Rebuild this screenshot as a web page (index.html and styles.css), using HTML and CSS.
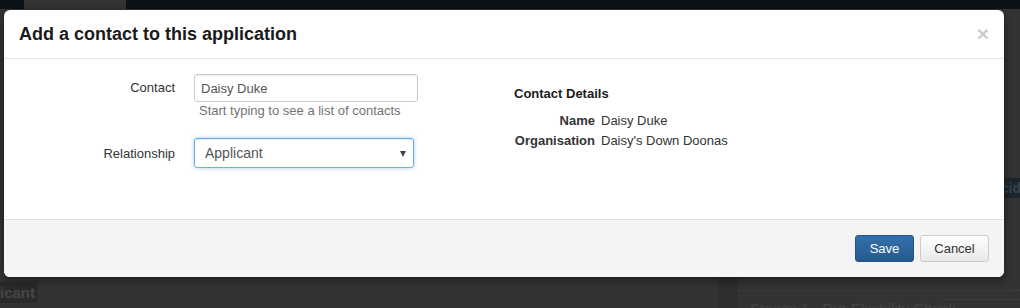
FILE: index.html
```html
<!DOCTYPE html>
<html>
<head>
  <title>Add a contact</title>
  <link rel="stylesheet" href="styles.css">
</head>
<body>
  <div class="page">
    <div class="navbar"><span class="nav-tab"></span></div>
    <div class="page-body">
      <span class="badge-left">icant</span>
      <span class="badge-right">cid</span>
      <span class="side-col"></span>
      <div class="stage-row">
        <span class="stage-title">Stages 1 - Pre-Eligibility Check</span>
        <span class="stage-box"></span>
      </div>
    </div>
  </div>

  <div class="modal">
    <div class="modal-header">
      <h4 class="modal-title">Add a contact to this application</h4>
      <button class="close" type="button">&times;</button>
    </div>

    <div class="modal-body">
      <form class="contact-form">
        <div class="form-group">
          <label for="contact">Contact</label>
          <div class="field">
            <input type="text" id="contact" class="form-control" value="Daisy Duke">
            <span class="help-block">Start typing to see a list of contacts</span>
          </div>
        </div>
        <div class="form-group">
          <label for="relationship" class="label-select">Relationship</label>
          <div class="field">
            <div class="select-wrap">
              <select id="relationship" class="form-control focused">
                <option>Applicant</option>
                <option>Referee</option>
              </select>
            </div>
          </div>
        </div>
      </form>

      <div class="details">
        <h5>Contact Details</h5>
        <dl>
          <dt>Name</dt>
          <dd>Daisy Duke</dd>
          <dt>Organisation</dt>
          <dd>Daisy's Down Doonas</dd>
        </dl>
      </div>
    </div>

    <div class="modal-footer">
      <button class="btn btn-primary" type="button">Save</button>
      <button class="btn btn-default" type="button">Cancel</button>
    </div>
  </div>
</body>
</html>
```

FILE: styles.css
```css
body {
  margin: 0;
  background-color: #333;
  font-family: "Liberation Sans", Arial, sans-serif;
  font-size: 13px;
  color: #333;
}

.page {
  height: 308px;
  overflow: hidden;
}

.navbar {
  height: 9px;
  background-color: #0b1218;
}

.nav-tab {
  display: block;
  margin-left: 24px;
  width: 102px;
  height: 9px;
  background-color: #333;
}

.page-body {
  position: relative;
  height: 299px;
}

.badge-left {
  position: absolute;
  left: -3px;
  top: 273px;
  padding: 2px 3px;
  background-color: #2a2a2a;
  border-radius: 3px;
  color: #454545;
  font-weight: bold;
  font-size: 15px;
}

.badge-right {
  position: absolute;
  right: -4px;
  top: 169px;
  padding: 2px 3px;
  background-color: #1c252c;
  color: #34424c;
  font-weight: bold;
  font-size: 14px;
}

.side-col {
  position: absolute;
  left: 718px;
  top: 268px;
  width: 20px;
  height: 40px;
  background-color: #2e2e2e;
}

.stage-row {
  position: absolute;
  left: 738px;
  top: 281px;
  right: 0;
  height: 18px;
  overflow: hidden;
  border-top: 1px dotted #444;
}

.stage-title {
  position: absolute;
  left: 12px;
  top: 9px;
  color: #444;
  font-size: 15px;
}

.stage-box {
  position: absolute;
  left: 202px;
  top: 8px;
  width: 90px;
  height: 20px;
  border: 1px solid #3d3d3d;
  border-radius: 3px;
}

/* modal dialog over the dimmed page */
.modal {
  position: absolute;
  left: 4px;
  top: 10px;
  width: 1000px;
  background-color: #fff;
  border-radius: 6px;
  box-shadow: 0 3px 9px rgba(0, 0, 0, 0.5);
  overflow: hidden;
}

.modal-header {
  display: flex;
  justify-content: space-between;
  align-items: flex-start;
  padding: 14px 15px 14px 15px;
  border-bottom: 1px solid #e5e5e5;
}

.modal-title {
  margin: 0;
  font-size: 18px;
  line-height: 20px;
  font-weight: bold;
  color: #1a1a1a;
}

.close {
  margin-top: 1px;
  padding: 0;
  border: none;
  background: none;
  font-family: "Liberation Sans", Arial, sans-serif;
  font-size: 21px;
  line-height: 18px;
  font-weight: bold;
  color: #ccc;
  cursor: pointer;
}

.modal-body {
  display: flex;
  height: 130px;
  padding: 15px;
}

.contact-form {
  width: 480px;
}

.form-group {
  display: flex;
  align-items: flex-start;
  margin-bottom: 18px;
}

.form-group label {
  width: 156px;
  padding-top: 6px;
  padding-right: 19px;
  text-align: right;
  color: #333;
}

.form-group .label-select {
  padding-top: 10px;
}

.field {
  width: 224px;
}

.form-control {
  box-sizing: border-box;
  width: 100%;
  height: 28px;
  padding: 4px 6px;
  border: 1px solid #ccc;
  border-radius: 3px;
  font-family: "Liberation Sans", Arial, sans-serif;
  font-size: 13px;
  color: #555;
  box-shadow: inset 0 1px 1px rgba(0, 0, 0, 0.075);
}

.help-block {
  display: block;
  margin-top: 1px;
  padding-left: 5px;
  color: #737373;
}

.select-wrap {
  position: relative;
  width: 220px;
  margin-top: 2px;
}

select.form-control {
  height: 30px;
  padding-left: 10px;
  appearance: none;
  background-color: #fff;
  font-size: 14px;
}

.select-wrap::after {
  content: "";
  position: absolute;
  right: 8px;
  top: 13px;
  border-left: 3px solid transparent;
  border-right: 3px solid transparent;
  border-top: 6px solid #444;
}

.focused {
  border-color: #66afe9;
  box-shadow: inset 0 1px 1px rgba(0, 0, 0, 0.075), 0 0 4px rgba(102, 175, 233, 0.6);
}

.details {
  padding-left: 15px;
}

.details h5 {
  margin: 12px 0 11px 0;
  font-size: 13px;
  font-weight: bold;
  color: #1a1a1a;
}

.details dl {
  display: grid;
  grid-template-columns: 81px auto;
  column-gap: 6px;
  row-gap: 2px;
  margin: 0;
  line-height: 18px;
}

.details dt {
  font-weight: bold;
  text-align: right;
  color: #333;
}

.details dd {
  margin: 0;
  color: #333;
}

.modal-footer {
  display: flex;
  justify-content: flex-end;
  gap: 6px;
  padding: 15px 15px 15px 15px;
  background-color: #f4f4f4;
  border-top: 1px solid #e0e0e0;
}

.btn {
  height: 27px;
  padding: 0 12px;
  border-radius: 3px;
  font-family: "Liberation Sans", Arial, sans-serif;
  font-size: 13px;
  cursor: pointer;
}

.btn-primary {
  width: 59px;
  color: #fff;
  border: 1px solid #245580;
  background-image: linear-gradient(to bottom, #3370ab 0%, #265a8f 100%);
}

.btn-default {
  width: 69px;
  color: #333;
  border: 1px solid #ccc;
  background-image: linear-gradient(to bottom, #fff 0%, #e8e8e8 100%);
}
```
